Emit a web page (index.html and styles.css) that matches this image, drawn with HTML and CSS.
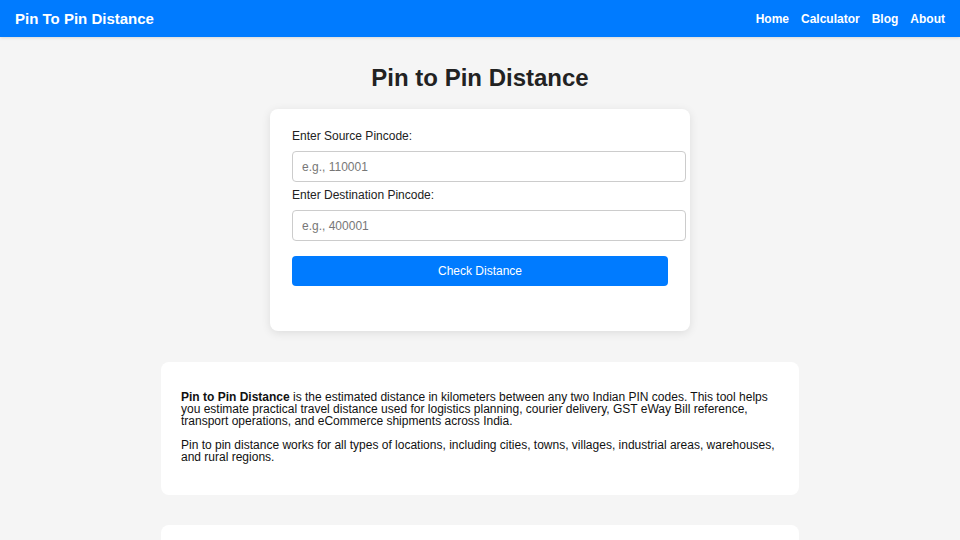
FILE: index.html
```html
<!DOCTYPE html>
<html lang="en">
<head>
<meta charset="utf-8">
<title>Pin To Pin Distance</title>
<link rel="stylesheet" href="styles.css">
</head>
<body>
<header class="topbar">
  <a class="brand" href="#">Pin To Pin Distance</a>
  <nav class="nav">
    <a href="#">Home</a>
    <a href="#">Calculator</a>
    <a href="#">Blog</a>
    <a href="#">About</a>
  </nav>
</header>

<main class="page">
  <h1 class="title">Pin to Pin Distance</h1>

  <form class="calc-card" onsubmit="return false">
    <label class="field-label" for="src">Enter Source Pincode:</label>
    <input class="field-input" id="src" type="text" placeholder="e.g., 110001">
    <label class="field-label" for="dst">Enter Destination Pincode:</label>
    <input class="field-input" id="dst" type="text" placeholder="e.g., 400001">
    <button class="check-btn" type="submit">Check Distance</button>
  </form>

  <section class="info-card">
    <p><strong>Pin to Pin Distance</strong> is the estimated distance in kilometers between any two Indian PIN codes. This tool helps you estimate practical travel distance used for logistics planning, courier delivery, GST eWay Bill reference, transport operations, and eCommerce shipments across India.</p>
    <p>Pin to pin distance works for all types of locations, including cities, towns, villages, industrial areas, warehouses, and rural regions.</p>
  </section>

  <section class="info-card"></section>
</main>
</body>
</html>
```

FILE: styles.css
```css
* {
  box-sizing: border-box;
}

body {
  margin: 0;
  background: #f5f5f5;
  font-family: "Liberation Sans", Arial, Helvetica, sans-serif;
  font-size: 12px;
  color: #111;
}

/* Top navigation bar */
.topbar {
  height: 37px;
  padding: 0 15px;
  background: #007bff;
  display: flex;
  align-items: center;
  justify-content: space-between;
  box-shadow: 0 1px 3px rgba(0, 0, 0, 0.12);
}

.brand {
  color: #fff;
  font-weight: bold;
  font-size: 15px;
  text-decoration: none;
}

.nav {
  display: flex;
  gap: 12px;
}

.nav a {
  color: #fff;
  font-weight: bold;
  font-size: 12px;
  text-decoration: none;
}

/* Main column */
.page {
  display: flex;
  flex-direction: column;
  align-items: center;
  padding-top: 27px;
}

.title {
  margin: 0 0 17px;
  font-size: 24px;
  line-height: 28px;
  color: #222;
}

/* Calculator card */
.calc-card {
  width: 420px;
  padding: 20px 22px 45px;
  background: #fff;
  border-radius: 8px;
  box-shadow: 0 2px 10px rgba(0, 0, 0, 0.1);
  margin-bottom: 31px;
}

.field-label {
  display: block;
  line-height: 15px;
  margin-bottom: 7px;
  color: #222;
}

.field-input {
  display: block;
  width: 394px;
  height: 31px;
  margin-bottom: 6px;
  padding: 0 9px;
  border: 1px solid #ccc;
  border-radius: 4px;
  font-family: inherit;
  font-size: 12px;
  color: #222;
  background: #fff;
}

.field-input::placeholder {
  color: #777;
}

.check-btn {
  display: block;
  width: 376px;
  height: 30px;
  margin-top: 15px;
  border: none;
  border-radius: 4px;
  background: #007bff;
  color: #fff;
  font-family: inherit;
  font-size: 12px;
  cursor: pointer;
}

/* Text cards */
.info-card {
  width: 638px;
  padding: 17px 20px 20px;
  background: #fff;
  border-radius: 8px;
  margin-bottom: 30px;
}

.info-card p {
  margin: 12px 0;
  line-height: 12px;
  color: #111;
}

.info-card:empty {
  height: 133px;
}
```
